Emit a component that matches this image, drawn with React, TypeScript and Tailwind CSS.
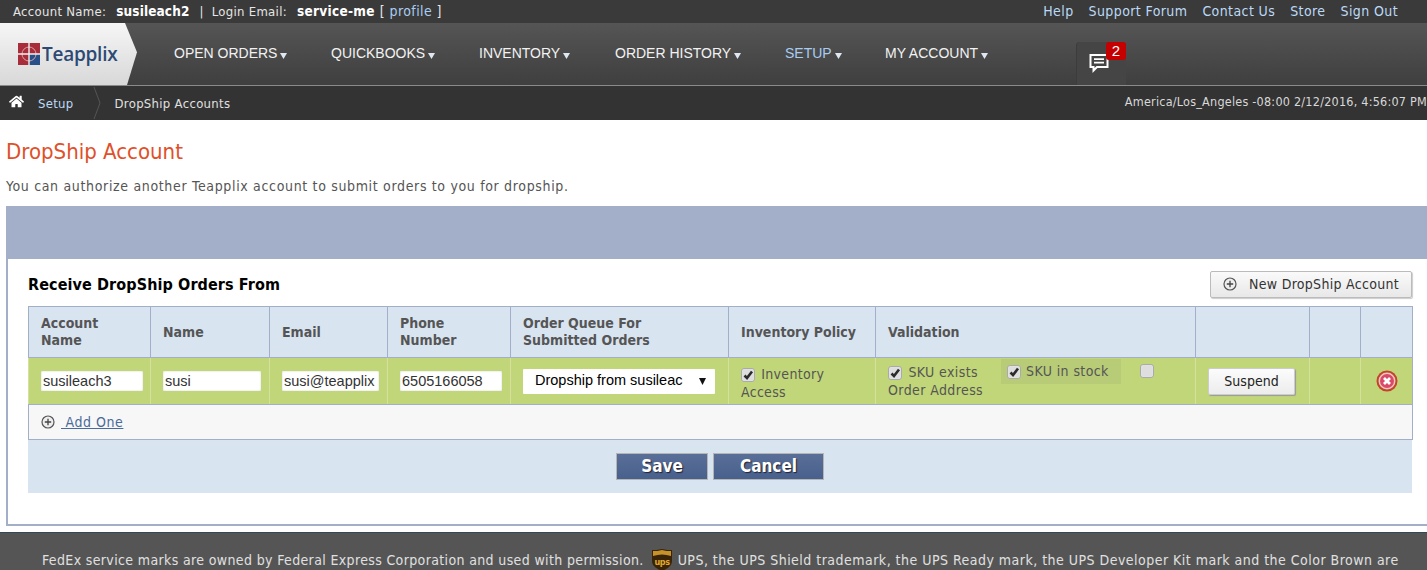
import { FaHome } from 'react-icons/fa';

const navItems = [
  { label: 'OPEN ORDERS', width: 'w-[157px]' },
  { label: 'QUICKBOOKS', width: 'w-[148px]' },
  { label: 'INVENTORY', width: 'w-[136px]' },
  { label: 'ORDER HISTORY', width: 'w-[170px]' },
  { label: 'SETUP', width: 'w-[100px]', active: true },
  { label: 'MY ACCOUNT', width: 'w-[150px]' },
];

function PlusCircle({ size = 14 }: { size?: number }) {
  return (
    <svg width={size} height={size} viewBox="0 0 14 14" className="shrink-0">
      <circle cx="7" cy="7" r="6" fill="#eee" stroke="#555" strokeWidth="1.2" />
      <path d="M7 3.8v6.4M3.8 7h6.4" stroke="#444" strokeWidth="1.3" />
    </svg>
  );
}

function Check({ checked = true }: { checked?: boolean }) {
  return (
    <span className="inline-flex h-[14px] w-[14px] shrink-0 items-center justify-center rounded-[3px] border border-[#aaa] bg-[#dedede] align-[-1px] shadow-[inset_0_0_1px_#fff]">
      {checked && (
        <svg width="11" height="10" viewBox="0 0 11 10">
          <path d="M1.5 5.5 4 8l5-6.5" fill="none" stroke="#2b2b2b" strokeWidth="2.6" />
        </svg>
      )}
    </span>
  );
}

function TextField({ value, width }: { value: string; width: string }) {
  return (
    <input
      readOnly
      value={value}
      className={`h-[20px] ${width} rounded-[1px] bg-white px-[2px] text-[14.5px] tracking-normal text-[#333] [font-family:'Liberation_Sans',sans-serif] shadow-[inset_0_0_2px_#ccc] outline-none`}
    />
  );
}

export default function App() {
  return (
    <div className="flex h-screen flex-col overflow-hidden bg-white tracking-[0.55px] text-[#555] [font-family:'DejaVu_Sans_Condensed','DejaVu_Sans',sans-serif]">
      <div className="flex h-[23px] shrink-0 items-center justify-between bg-[#3a3a3a] pl-[13px] pr-[29px] text-[13px] tracking-[0.3px] text-[#e6e6e6]">
        <div className="flex items-center whitespace-nowrap">
          <span>Account Name:</span>
          <b className="ml-[10px] text-[13.5px] tracking-[0.1px] text-white">susileach2</b>
          <span className="ml-[10px]">|</span>
          <span className="ml-[8px]">Login Email:</span>
          <b className="ml-[10px] text-[13.5px] text-white">service-me</b>
          <span className="ml-[5px] text-[14px] tracking-[0.4px]">[ <span className="text-[#a9cdf0]">profile</span> ]</span>
        </div>
        <div className="flex gap-[15px] text-[14px] tracking-[0.4px] text-[#bcd9f5]">
          <span>Help</span>
          <span>Support Forum</span>
          <span>Contact Us</span>
          <span>Store</span>
          <span>Sign Out</span>
        </div>
      </div>

      <div className="flex h-[63px] shrink-0 border-b border-[#8a8a8a] bg-gradient-to-b from-[#555555] to-[#3f3f3f]">
        <div className="flex h-full w-[138px] shrink-0 items-center bg-gradient-to-b from-[#f6f6f6] to-[#d8d8d8] pl-[18px] [clip-path:polygon(0_0,125px_0,137px_47%,127px_100%,0_100%)]">
          <svg width="22" height="22" viewBox="0 0 22 22" className="shrink-0">
            <rect width="22" height="22" fill="#a92c3a" />
            <rect x="11" y="11" width="11" height="11" fill="#27508a" />
            <circle cx="11" cy="11" r="7" fill="none" stroke="#d9a0a0" strokeWidth="1" />
            <path d="M11 0v22M0 11h22" stroke="#f0f0f0" strokeWidth="1.4" />
          </svg>
          <span className="ml-[2px] text-[19px] font-semibold tracking-[-0.25px] text-[#2c4a74] [font-family:'Open_Sans',sans-serif]">
            Teapplix
          </span>
        </div>
        <nav className="ml-[36px] flex items-center pb-[2px] text-[14px] tracking-normal [font-family:'Liberation_Sans',sans-serif]">
          {navItems.map((item) => (
            <div
              key={item.label}
              className={`${item.width} flex items-center whitespace-nowrap ${item.active ? 'text-[#a9cdf0]' : 'text-[#f2f2f2]'}`}
            >
              {item.label}
              <svg width="7" height="6" viewBox="0 0 7 6" className="ml-[3px] mt-[5px]">
                <path d="M0 0h7L3.5 6z" fill="#dfe8f2" />
              </svg>
            </div>
          ))}
        </nav>
        <div className="relative ml-[41px] mt-[19px] flex h-[43px] w-[50px] items-center justify-center rounded-t-[4px] border-l border-[#3c3c3c] bg-[#454545]">
          <svg width="20" height="20" viewBox="0 0 20 20" className="mb-[2px] mr-[5px]">
            <path d="M1.5 2h17v12H8l-3.5 3.5V14h-3z" fill="none" stroke="#fff" strokeWidth="2" />
            <path d="M5 6.2h10M5 9.7h10" stroke="#fff" strokeWidth="1.8" />
          </svg>
          <span className="absolute left-[29px] top-0 flex h-[18px] w-[20px] items-center justify-center rounded-[3px] bg-[#c40000] text-[15px] tracking-normal text-white [font-family:'Liberation_Sans',sans-serif]">
            2
          </span>
        </div>
      </div>

      <div className="flex h-[34px] shrink-0 items-center justify-between bg-[#333333] pl-[9px] text-[13px] tracking-[0.3px]">
        <div className="flex items-center">
          <FaHome className="mb-[3px] text-white" size={15} />
          <span className="ml-[14px] pt-[1px] text-[#bcd9f5]">Setup</span>
          <svg width="8" height="32" viewBox="0 0 8 32" className="ml-[19px]">
            <path d="M1 0l6 16-6 16" fill="none" stroke="#555" />
          </svg>
          <span className="ml-[14px] pt-[1px] text-[#e0e0e0]">DropShip Accounts</span>
        </div>
        <span className="whitespace-nowrap pb-[2px] text-[12.5px] tracking-[0.23px] text-[#d8d8d8]">America/Los_Angeles -08:00 2/12/2016, 4:56:07 PM</span>
      </div>

      <h1 className="mt-[17px] h-[30px] pl-[6px] text-[22px] leading-[30px] tracking-normal text-[#e0502a]">DropShip Account</h1>
      <p className="mt-[10px] pl-[6px] text-[14px] leading-[18px] tracking-[0.66px] text-[#555]">
        You can authorize another Teapplix account to submit orders to you for dropship.
      </p>

      <section className="ml-[6px] mt-[11px] h-[320px] shrink-0 border-2 border-t-0 border-r-0 border-[#a3afc9]">
        <div className="h-[53px] bg-[#a3afc9]" />
        <div className="pl-[20px] pr-[15px]">
          <div className="flex h-[47px] items-center justify-between">
            <h2 className="mt-[4px] text-[16px] font-bold tracking-[0.1px] text-black">Receive DropShip Orders From</h2>
            <button className="mt-[3px] flex h-[27px] w-[202px] items-center justify-center gap-[12px] rounded-[2px] border border-[#bbb] bg-gradient-to-b from-[#fafafa] to-[#e8e8e8] text-[14px] tracking-[0.3px] text-[#333] shadow-[1px_1px_1px_#ccc]">
              <PlusCircle />
              New DropShip Account
            </button>
          </div>

          <table className="w-[1384px] table-fixed border-collapse text-[14px]">
            <colgroup>
              <col className="w-[122px]" />
              <col className="w-[119px]" />
              <col className="w-[118px]" />
              <col className="w-[123px]" />
              <col className="w-[218px]" />
              <col className="w-[147px]" />
              <col className="w-[320px]" />
              <col className="w-[114px]" />
              <col className="w-[51px]" />
              <col className="w-[52px]" />
            </colgroup>
            <thead>
              <tr className="h-[51px] bg-[#d9e4f1] text-left leading-[17px] tracking-normal text-[#555]">
                {['Account Name', 'Name', 'Email', 'Phone Number', 'Order Queue For Submitted Orders', 'Inventory Policy', 'Validation', '', '', ''].map((h, i) => (
                  <th key={i} className="border border-[#a3afc9] px-[12px] font-bold">
                    {h}
                  </th>
                ))}
              </tr>
            </thead>
            <tbody>
              <tr className="h-[47px] bg-[#c1d678]">
                <td className="border border-[#a3afc9] border-x-[#d4e09c] pl-[12px]"><TextField value="susileach3" width="w-[102px]" /></td>
                <td className="border border-[#a3afc9] border-x-[#d4e09c] pl-[12px]"><TextField value="susi" width="w-[98px]" /></td>
                <td className="border border-[#a3afc9] border-x-[#d4e09c] pl-[12px]"><TextField value="susi@teapplix" width="w-[97px]" /></td>
                <td className="border border-[#a3afc9] border-x-[#d4e09c] pl-[12px]"><TextField value="6505166058" width="w-[102px]" /></td>
                <td className="border border-[#a3afc9] border-x-[#d4e09c] pl-[12px]">
                  <div className="flex h-[25px] w-[192px] items-center justify-between rounded-[1px] bg-white pl-[12px] pr-[9px] text-[14.5px] tracking-normal text-black [font-family:'Liberation_Sans',sans-serif]">
                    <span className="w-[148px] overflow-hidden whitespace-nowrap">Dropship from susileac</span>
                    <svg width="7" height="7" viewBox="0 0 7 7"><path d="M0 0h7L3.5 7z" fill="#111" /></svg>
                  </div>
                </td>
                <td className="border border-[#a3afc9] border-x-[#d4e09c] pl-[12px] pt-[4px] leading-[18px] tracking-[0.3px] text-[#555]">
                  <Check /> <span className="ml-[2px]">Inventory</span>
                  <br />
                  Access
                </td>
                <td className="border border-[#a3afc9] border-x-[#d4e09c] pl-[12px] tracking-[0.4px] text-[#555]">
                  <div className="flex items-start">
                    <div className="w-[113px] leading-[18px]">
                      <Check /> <span className="ml-[2px]">SKU exists</span>
                      <br />
                      <span className="whitespace-nowrap">Order Address</span>
                    </div>
                    <div className="mt-[-4px] flex h-[25px] w-[120px] items-center gap-[5px] bg-[#b8cc78] pl-[6px]">
                      <Check /> SKU in stock
                    </div>
                    <div className="ml-[19px] mt-[1px] flex"><Check checked={false} /></div>
                  </div>
                </td>
                <td className="border border-[#a3afc9] border-x-[#d4e09c] pl-[12px]">
                  <button className="h-[27px] w-[87px] rounded-[2px] border border-[#ccc] bg-gradient-to-b from-[#fcfcfc] to-[#ececec] text-[14px] tracking-normal text-[#222] shadow-[1px_1px_1px_#999]">
                    Suspend
                  </button>
                </td>
                <td className="border border-[#a3afc9] border-x-[#d4e09c]" />
                <td className="border border-[#a3afc9] border-l-[#d4e09c] text-center">
                  <svg width="22" height="22" viewBox="0 0 22 22" className="mx-auto">
                    <circle cx="11" cy="11" r="10.5" fill="#c4432a" />
                    <circle cx="11" cy="11" r="8.5" fill="#f2c8c0" />
                    <circle cx="11" cy="11" r="7" fill="#d84a68" />
                    <path d="M8 8l6 6M14 8l-6 6" stroke="#fff" strokeWidth="2.8" />
                  </svg>
                </td>
              </tr>
              <tr className="h-[35px] bg-[#f7f7f7]">
                <td colSpan={10} className="border border-[#a3afc9] pl-[12px]">
                  <div className="flex items-center text-[#4a6a9c]">
                    <PlusCircle />
                    <span className="ml-[6px] underline">&nbsp;Add One</span>
                  </div>
                </td>
              </tr>
            </tbody>
          </table>

          <div className="flex h-[53px] w-[1384px] items-center justify-center gap-[5px] bg-[#d9e4f1]">
            <button className="h-[27px] w-[92px] border border-[#b5b5b5] bg-gradient-to-b from-[#5a6f98] to-[#47608c] text-[17px] font-bold tracking-normal text-white [text-shadow:1px_1px_1px_#223]">Save</button>
            <button className="h-[27px] w-[111px] border border-[#b5b5b5] bg-gradient-to-b from-[#5a6f98] to-[#47608c] text-[17px] font-bold tracking-normal text-white [text-shadow:1px_1px_1px_#223]">Cancel</button>
          </div>
        </div>
      </section>

      <footer className="mt-[6px] flex flex-1 items-start whitespace-nowrap border-t border-[#2e4a55] bg-[#555555] pl-[42px] pt-[16px] text-[14px] leading-[20px] text-[#e0e0e0]">
        <span className="pt-[1px] tracking-[0.36px]">FedEx service marks are owned by Federal Express Corporation and used with permission.</span>
        <svg width="20" height="22" viewBox="0 0 20 22" className="ml-[8px] mr-[6px] shrink-0">
          <path d="M10 0c4 1 7 1 10 1v11c0 5-5 8-10 10C5 20 0 17 0 12V1c3 0 6 0 10-1z" fill="#3a2408" />
          <path d="M1 7V2c3 0 6 0 9-1 3 1 6 1 9 1v5c-3-1-6-1.5-9-1.5S4 6 1 7z" fill="#c8922a" />
          <text x="10" y="16" textAnchor="middle" fontSize="9" fontWeight="700" fill="#e0a92e" letterSpacing="-0.4">ups</text>
        </svg>
        <span className="pt-[1px] tracking-[0.48px]">UPS, the UPS Shield trademark, the UPS Ready mark, the UPS Developer Kit mark and the Color Brown are</span>
      </footer>
    </div>
  );
}
